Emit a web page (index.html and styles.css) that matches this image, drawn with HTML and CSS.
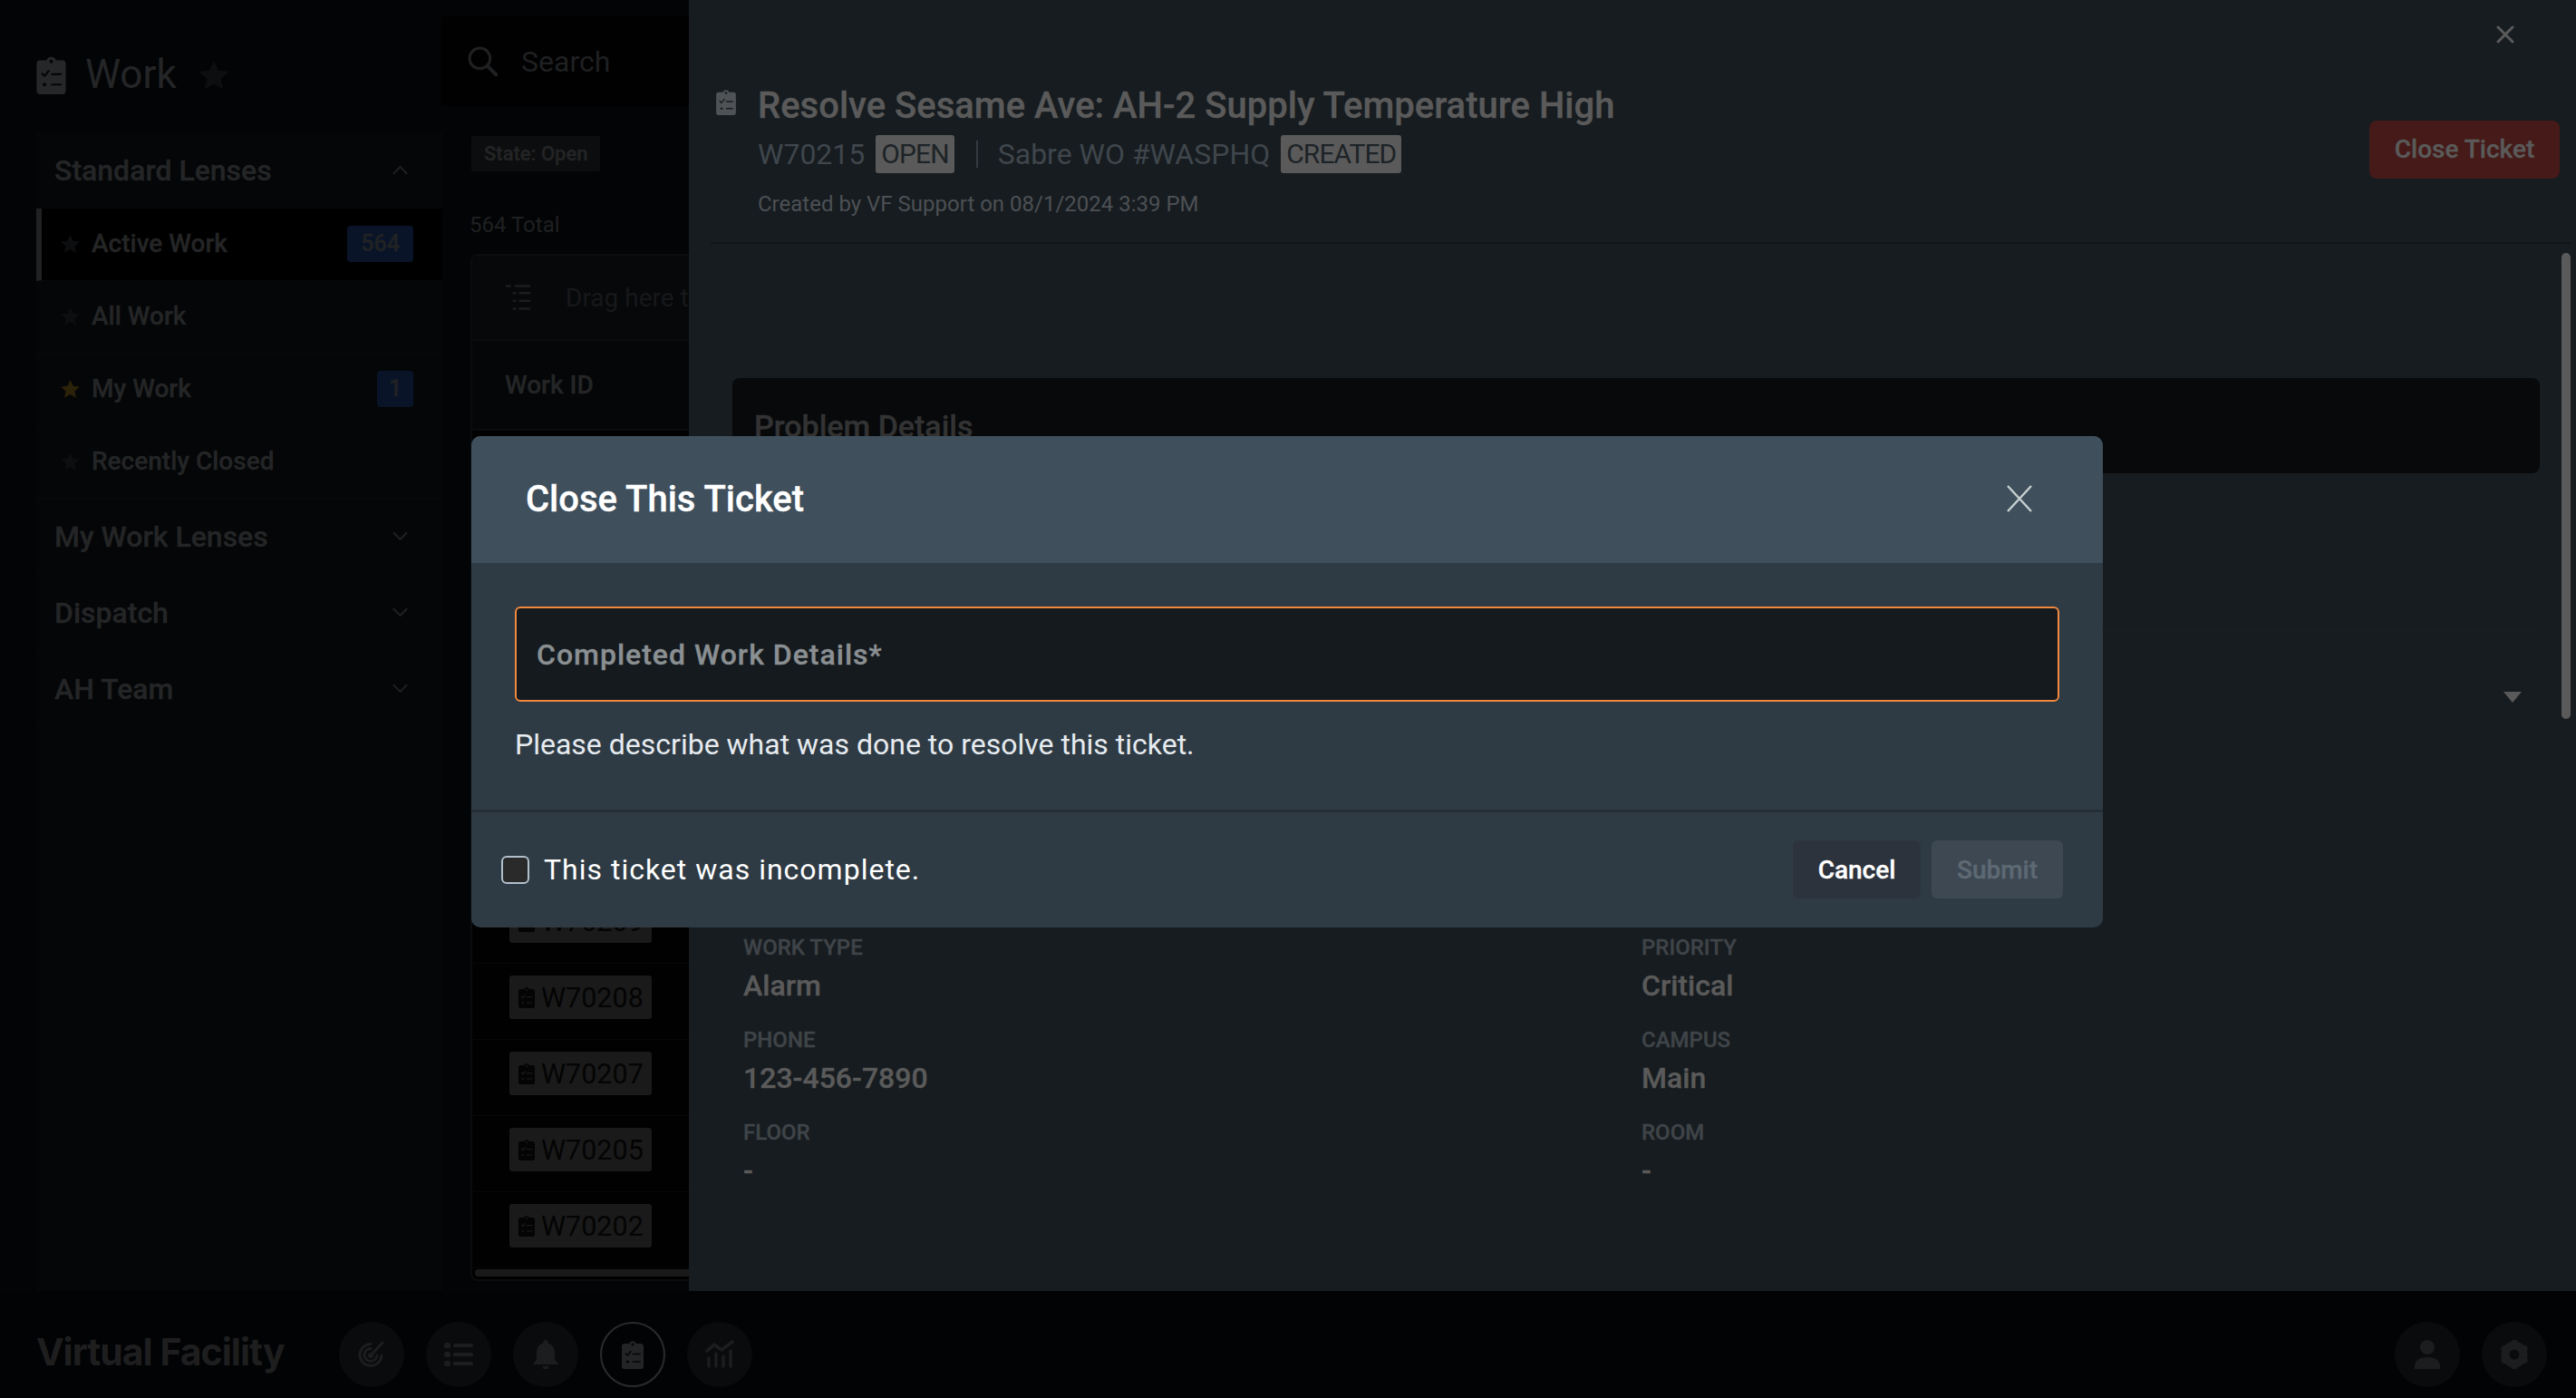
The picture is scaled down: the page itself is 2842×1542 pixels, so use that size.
FILE: index.html
```html
<!DOCTYPE html>
<html lang="en">
<head>
<meta charset="utf-8">
<title>Work - Virtual Facility</title>
<link rel="stylesheet" href="styles.css">
</head>
<body>
<svg class="defs" width="0" height="0" aria-hidden="true">
  <symbol id="clip" viewBox="0 0 24 32">
    <path fill="currentColor" d="M3 4h5.2a4 4 0 0 1 7.6 0H21a3 3 0 0 1 3 3v22a3 3 0 0 1-3 3H3a3 3 0 0 1-3-3V7a3 3 0 0 1 3-3z"/>
    <circle cx="12" cy="5" r="1.5" fill="var(--cut)"/>
    <path fill="none" stroke="var(--cut)" stroke-width="1.6" stroke-linecap="round" stroke-linejoin="round" d="M4.5 15l2 2 3.4-4.2M12.5 15.5H20M12.5 24H20"/>
    <circle cx="6.5" cy="24" r="1.5" fill="var(--cut)"/>
  </symbol>
  <symbol id="star" viewBox="1 1.500 22 21">
    <path fill="currentColor" d="M12 1.5l3.2 7.1 7.7.8-5.8 5.2 1.7 7.6L12 18.3l-6.8 3.9 1.7-7.6L1.100 9.400l7.700-.8z"/>
  </symbol>
  <symbol id="chev-down" viewBox="0 0 18 11">
    <path fill="none" stroke="currentColor" stroke-width="2" stroke-linecap="round" d="M1.500 1.500L9 9l7.500-7.500"/>
  </symbol>
</svg>

<main class="app">
  <aside class="sidebar">
    <div class="page-head">
      <svg class="page-icon"><use href="#clip"/></svg>
      <span class="page-title">Work</span>
      <svg class="page-star"><use href="#star"/></svg>
    </div>
    <nav class="lens-panel">
      <div class="lens-head"><span>Standard Lenses</span><svg class="chev chev-up"><use href="#chev-down"/></svg></div>
      <a class="lens lens-active"><svg class="lens-star"><use href="#star"/></svg><span class="lens-name">Active Work</span><b class="count">564</b></a>
      <a class="lens"><svg class="lens-star"><use href="#star"/></svg><span class="lens-name">All Work</span></a>
      <a class="lens"><svg class="lens-star lens-star-on"><use href="#star"/></svg><span class="lens-name">My Work</span><b class="count count-single">1</b></a>
      <a class="lens"><svg class="lens-star"><use href="#star"/></svg><span class="lens-name">Recently Closed</span></a>
      <div class="lens-head"><span>My Work Lenses</span><svg class="chev"><use href="#chev-down"/></svg></div>
      <div class="lens-head"><span>Dispatch</span><svg class="chev"><use href="#chev-down"/></svg></div>
      <div class="lens-head"><span>AH Team</span><svg class="chev"><use href="#chev-down"/></svg></div>
    </nav>
  </aside>

  <section class="content">
    <div class="search">
      <svg class="search-icon" viewBox="0 0 32 32"><circle cx="13" cy="13" r="11" fill="none" stroke="currentColor" stroke-width="3"/><path d="M21 21l9.500 9.500" stroke="currentColor" stroke-width="4" stroke-linecap="round"/></svg>
      <span>Search</span>
    </div>
    <div class="chip-row"><span class="filter-chip">State: Open</span></div>
    <div class="total">564 Total</div>
    <div class="table">
      <div class="group-row">
        <svg class="group-icon" viewBox="0 0 28 30"><path fill="none" stroke="currentColor" stroke-width="2.500" d="M0 2h6M10 2h18M8 10h4M15 10h13M8 19h4M15 19h13M8 28h4M15 28h13"/></svg>
        <span>Drag here to set row groups</span>
      </div>
      <div class="head-row">Work ID</div>
      <div class="row"></div>
      <div class="row"></div>
      <div class="row"></div>
      <div class="row"></div>
      <div class="row"></div>
      <div class="row"></div>
      <div class="row"><span class="id-chip"><svg class="id-icon"><use href="#clip"/></svg>W70209</span></div>
      <div class="row"><span class="id-chip"><svg class="id-icon"><use href="#clip"/></svg>W70208</span></div>
      <div class="row"><span class="id-chip"><svg class="id-icon"><use href="#clip"/></svg>W70207</span></div>
      <div class="row"><span class="id-chip"><svg class="id-icon"><use href="#clip"/></svg>W70205</span></div>
      <div class="row row-last"><span class="id-chip"><svg class="id-icon"><use href="#clip"/></svg>W70202</span></div>
      <div class="h-scroll"></div>
    </div>
  </section>

  <aside class="drawer">
    <button class="drawer-close" aria-label="Close"><svg viewBox="0 0 20 20"><path d="M2 2l16 16M18 2L2 18" stroke="currentColor" stroke-width="3" stroke-linecap="round"/></svg></button>
    <header class="ticket-head">
      <svg class="ticket-icon"><use href="#clip"/></svg>
      <div class="ticket-text">
        <h1>Resolve Sesame Ave: AH-2 Supply Temperature High</h1>
        <div class="ticket-meta">
          <span>W70215</span><span class="tag">OPEN</span><i class="meta-sep"></i><span>Sabre WO #WASPHQ</span><span class="tag">CREATED</span>
        </div>
        <p class="ticket-by">Created by VF Support on 08/1/2024 3:39 PM</p>
      </div>
      <button class="close-ticket">Close Ticket</button>
    </header>
    <div class="ticket-body">
      <div class="problem"><h2>Problem Details</h2></div>
      <div class="select-arrow"></div>
      <div class="field-rule"></div>
      <dl class="fields">
        <div><dt>WORK TYPE</dt><dd>Alarm</dd></div>
        <div><dt>PRIORITY</dt><dd>Critical</dd></div>
        <div><dt>PHONE</dt><dd>123-456-7890</dd></div>
        <div><dt>CAMPUS</dt><dd>Main</dd></div>
        <div><dt>FLOOR</dt><dd>-</dd></div>
        <div><dt>ROOM</dt><dd>-</dd></div>
      </dl>
      <div class="v-scroll"></div>
    </div>
  </aside>

  <div class="modal" role="dialog">
    <div class="modal-head">
      <h3>Close This Ticket</h3>
      <svg class="modal-x" viewBox="0 0 28 30" preserveAspectRatio="none"><path d="M1 1l26 28M27 1L1 29" stroke="currentColor" stroke-width="2.400"/></svg>
    </div>
    <div class="modal-body">
      <div class="textbox">Completed Work Details*</div>
      <p class="help">Please describe what was done to resolve this ticket.</p>
    </div>
    <div class="modal-foot">
      <label class="check"><span class="check-box"></span>This ticket was incomplete.</label>
      <div class="foot-actions">
        <button class="btn btn-cancel">Cancel</button>
        <button class="btn btn-submit">Submit</button>
      </div>
    </div>
  </div>
</main>

<footer class="bottom-bar">
  <div class="brand">Virtual Facility</div>
  <div class="nav-group">
    <span class="nav-btn"><svg class="nav-icon" viewBox="0 0 32 32" fill="none" stroke="currentColor" stroke-linecap="round"><path stroke-width="3" d="M27 17A12 12 0 1 1 15 4.500"/><path stroke-width="3" d="M22 17a7 7 0 1 1-7-7.500"/><circle cx="15" cy="17" r="3" fill="currentColor" stroke="none"/><path stroke-width="3" d="M15 17L28 3"/></svg></span>
    <span class="nav-btn"><svg class="nav-icon" viewBox="0 0 32 32" fill="currentColor"><rect x="0" y="3" width="7" height="6" rx="2.500"/><rect x="0" y="13" width="7" height="6" rx="2.500"/><rect x="0" y="23" width="7" height="6" rx="2.500"/><rect x="10" y="4" width="22" height="4" rx="1.500"/><rect x="10" y="14" width="22" height="4" rx="1.500"/><rect x="10" y="24" width="22" height="4" rx="1.500"/></svg></span>
    <span class="nav-btn"><svg class="nav-icon" viewBox="0 0 32 32" fill="currentColor"><path d="M16 0a2.500 2.500 0 0 1 2.500 2.500v.700C23.500 4.500 26 9 26 14v6c0 2 1.500 4 3.500 5.500v1.500H2.500v-1.500C4.500 24 6 22 6 20v-6c0-5 2.500-9.500 7.500-10.800v-.700A2.500 2.500 0 0 1 16 0z"/><path d="M12.500 29h7a3.500 3.500 0 0 1-7 0z"/></svg></span>
    <span class="nav-btn nav-btn-on"><svg class="nav-icon nav-clip"><use href="#clip"/></svg></span>
    <span class="nav-btn"><svg class="nav-icon" viewBox="0 0 32 32" fill="none" stroke="currentColor" stroke-linecap="round" stroke-linejoin="round" stroke-width="3.500"><path d="M2 12l8-7 8 6L30 2"/><path d="M4 20v9M12 15v14M20 18v11M28 12v17"/></svg></span>
  </div>
  <div class="nav-group nav-right">
    <span class="nav-btn"><svg class="nav-icon" viewBox="0 0 32 32" fill="currentColor"><circle cx="16" cy="8" r="8"/><path d="M2 32v-3c0-6 5-10 14-10s14 4 14 10v3z"/></svg></span>
    <span class="nav-btn"><svg class="nav-icon" viewBox="0 0 32 32"><circle cx="16" cy="16" r="10" fill="none" stroke="currentColor" stroke-width="9"/><g stroke="currentColor" stroke-width="7" stroke-linecap="round"><path d="M16 3.500v-.500M16 28.500v.500M5.200 9.700l-.4-.200M26.800 22.300l.4.200M5.200 22.300l-.4.200M26.800 9.700l.4-.200"/></g></svg></span>
  </div>
</footer>
</body>
</html>
```
FILE: styles.css
```css
* { box-sizing: border-box; }
html, body { margin: 0; height: 100%; }
body {
  width: 2842px;
  height: 1542px;
  overflow: hidden;
  display: flex;
  flex-direction: column;
  background: #030406;
  font-family: Roboto, "Liberation Sans", sans-serif;
  --cut: #030406;
}
.defs { position: absolute; }
button { font-family: inherit; border: 0; padding: 0; }
p, h1, h2, h3, dl, dd, dt { margin: 0; }

/* Medium text in the reference renders a little heavier than plain Roboto 500 */
.lens-head, .lens-name, .filter-chip, .head-row, .ticket-text h1, .problem h2,
.fields dt, .fields dd, .close-ticket, .modal-head h3, .textbox, .btn, .count {
  -webkit-text-stroke: 0.35px currentColor;
}

.app {
  position: relative;
  flex: 0 0 1424px;
  display: flex;
  overflow: hidden;
}

/* Sidebar */
.sidebar {
  flex: 0 0 488px;
  padding-left: 40px;
  display: flex;
  flex-direction: column;
}
.page-head {
  height: 149px;
  display: flex;
  align-items: flex-start;
  padding-top: 61px;
  color: #232425;
}
.page-icon { width: 33px; height: 43px; color: #262728; --cut: #050608; }
.page-title {
  margin-left: 21px;
  margin-top: -3px;
  font-size: 44px;
  line-height: 48px;
  color: #242526;
}
.page-star { width: 34px; height: 32px; margin: 6px 0 0 24px; color: #0d0e0f; }
.lens-panel {
  flex: 1;
  background: #050608;
  margin-top: -3px;
}
.lens-head {
  height: 84px;
  padding: 0 38px 0 20px;
  display: flex;
  align-items: center;
  justify-content: space-between;
  font-size: 32px;
  font-weight: 500;
  color: #242526;
  border-bottom: 1px solid #07080a;
}
.chev { width: 17px; height: 11px; color: #202122; }
.chev-up { transform: rotate(180deg); }
.lens {
  height: 80px;
  padding: 0 32px 2px 27px;
  display: flex;
  align-items: center;
  font-size: 28px;
  font-weight: 500;
  color: #242526;
  border-bottom: 1px solid #08090b;
}
.lens-active {
  background: #000;
  border-left: 6px solid #202122;
  padding-left: 21px;
  color: #242526;
}
.lens-star { width: 21px; height: 20px; flex: none; color: #0d0e10; }
.lens-star-on { color: #2c2209; }
.lens-name { margin-left: 13px; flex: 1; }
.count {
  height: 40px;
  min-width: 40px;
  padding: 0 15px;
  border-radius: 4px;
  background: #0a1428;
  color: #202224;
  font-size: 25px;
  font-weight: 500;
  line-height: 40px;
  text-align: center;
}
.count-single { padding: 0; }

/* Content */
.content {
  flex: 1;
  min-width: 0;
  padding: 18px 0 0 0;
  display: flex;
  flex-direction: column;
}
.search {
  height: 99px;
  margin-left: -1px;
  padding-left: 29px;
  display: flex;
  align-items: center;
  gap: 26px;
  background: #010102;
  color: #1f2021;
  font-size: 32px;
}
.search-icon { width: 33px; height: 33px; }
.chip-row { margin: 33px 0 0 32px; height: 39px; }
.filter-chip {
  display: inline-block;
  height: 39px;
  padding: 0 14px;
  background: #0c0d0e;
  color: #232425;
  border-radius: 2px;
  font-size: 22px;
  font-weight: 500;
  line-height: 39px;
}
.total {
  margin: 43px 0 0 30px;
  font-size: 24px;
  line-height: 32px;
  color: #1f2021;
}
.table {
  margin: 16px 0 0 31px;
  width: 1600px;
  height: 1133px;
  border: 2px solid #0b0c0d;
  border-radius: 8px;
  background: #010101;
  position: relative;
  overflow: hidden;
}
.group-row {
  height: 94px;
  padding-left: 37px;
  display: flex;
  align-items: center;
  gap: 39px;
  background: #07080a;
  color: #17181a;
  font-size: 28px;
  border-bottom: 2px solid #0b0c0d;
}
.group-icon { width: 27px; height: 30px; color: #1c1d1e; }
.head-row {
  height: 99px;
  padding: 0 0 0 36px;
  display: flex;
  align-items: center;
  background: #050608;
  color: #242526;
  font-size: 28px;
  font-weight: 500;
  border-bottom: 2px solid #0b0c0d;
}
.row {
  height: 84px;
  padding: 13px 0 0 41px;
  background: #010101;
  border-bottom: 1px solid #060708;
}
.id-chip {
  display: inline-flex;
  align-items: center;
  width: 157px;
  height: 48px;
  padding-left: 10px;
  background: #1a1a1a;
  border-radius: 3px;
  color: #040404;
  font-size: 30.500px;
  gap: 7px;
}
.id-icon { width: 18px; height: 24px; color: #040404; --cut: #1a1a1a; }
.h-scroll {
  position: absolute;
  left: 3px;
  right: 3px;
  bottom: 3px;
  height: 8px;
  border-radius: 4px;
  background: #191919;
}

/* Drawer */
.drawer {
  position: absolute;
  left: 760px;
  top: 0;
  width: 2082px;
  height: 1424px;
  background: #171c20;
  display: flex;
  flex-direction: column;
}
.drawer-close {
  position: absolute;
  right: 68px;
  top: 28px;
  width: 20px;
  height: 20px;
  background: none;
  color: #5a5a5a;
}
.drawer-close svg { display: block; width: 20px; height: 20px; }
.ticket-head {
  flex: 0 0 269px;
  margin: 0 6px 0 24px;
  padding: 98px 12px 0 6px;
  display: flex;
  align-items: flex-start;
  border-bottom: 2px solid #111518;
}
.ticket-icon { width: 22px; height: 29px; flex: none; color: #505356; --cut: #171c20; }
.ticket-text { flex: 1; margin-left: 24px; }
.ticket-text h1 {
  font-size: 40px;
  font-weight: 500;
  line-height: 40px;
  margin-top: -1px;
  color: #5a5a5a;
}
.ticket-meta {
  margin-top: 12px;
  display: flex;
  align-items: center;
  gap: 12px;
  font-size: 32px;
  color: #3f464c;
  height: 42px;
}
.tag {
  height: 42px;
  line-height: 42px;
  padding: 0 6px;
  background: #5a5a5a;
  border-radius: 3px;
  color: #1d2327;
  font-size: 30px;
  letter-spacing: -0.9px;
}
.meta-sep {
  width: 2px;
  height: 30px;
  margin: 0 10px 0 12px;
  background: #333a40;
}
.ticket-by {
  margin-top: 18px;
  font-size: 24px;
  line-height: 32px;
  color: #4c5054;
}
.close-ticket {
  width: 210px;
  height: 64px;
  margin-top: 35px;
  padding-bottom: 2px;
  background: #451a18;
  color: #5a5a5a;
  border-radius: 8px;
  font-size: 28px;
  font-weight: 500;
}
.ticket-body {
  position: relative;
  flex: 1;
  padding: 148px 40px 0 48px;
}
.problem {
  height: 105px;
  padding: 30px 0 0 24px;
  background: #07090b;
  border-radius: 8px;
}
.problem h2 { font-size: 34px; font-weight: 500; line-height: 46px; color: #333; }
.select-arrow {
  position: absolute;
  left: 2002px;
  top: 494px;
  width: 20px;
  height: 12px;
  background: #5a5a5a;
  clip-path: polygon(0 0, 100% 0, 50% 100%);
}
.field-rule { height: 1px; margin-top: 173px; background: #1a1f23; }
.fields {
  margin: 337px 0 0 12px;
  display: grid;
  grid-template-columns: 991px 1fr;
  grid-auto-rows: 102px;
}
.fields dt { font-size: 24px; font-weight: 500; line-height: 24px; color: #3f4448; }
.fields dd { margin-top: 10px; font-size: 32px; font-weight: 500; line-height: 40px; color: #5a5a5a; }
.v-scroll {
  position: absolute;
  left: 2066px;
  top: 10px;
  width: 10px;
  height: 514px;
  border-radius: 5px;
  background: #5a5a5a;
}

/* Modal */
.modal {
  position: absolute;
  left: 520px;
  top: 481px;
  width: 1800px;
  height: 542px;
  border-radius: 10px;
  background: #2f3b44;
  display: flex;
  flex-direction: column;
  overflow: hidden;
}
.modal-head {
  flex: 0 0 140px;
  padding: 0 78px 2px 60px;
  background: #3f4f5c;
  display: flex;
  align-items: center;
  justify-content: space-between;
}
.modal-head h3 { font-size: 40px; font-weight: 500; color: #fff; }
.modal-x { width: 28px; height: 30px; color: #c8d0d0; }
.modal-body {
  flex: 0 0 275px;
  padding: 48px 48px 0;
  border-bottom: 3px solid #262e35;
}
.textbox {
  height: 105px;
  padding-left: 22px;
  display: flex;
  align-items: center;
  background: #151a1e;
  border: 2px solid #f0883e;
  border-radius: 6px;
  color: #8a8f92;
  font-size: 32px;
  font-weight: 500;
  letter-spacing: 1px;
}
.help { margin-top: 29px; font-size: 32px; line-height: 36px; color: #e6ebf0; }
.modal-foot {
  flex: 1;
  padding: 0 44px 1px 33px;
  display: flex;
  align-items: center;
  justify-content: space-between;
}
.check {
  display: flex;
  align-items: center;
  gap: 16px;
  color: #fff;
  font-size: 32px;
  letter-spacing: 1px;
}
.check-box {
  width: 31px;
  height: 31px;
  background: #2a2a2a;
  border: 2px solid #b0bfcc;
  border-radius: 6px;
}
.foot-actions { display: flex; gap: 12px; }
.btn {
  height: 64px;
  border-radius: 6px;
  font-size: 28px;
  font-weight: 500;
}
.btn-cancel { width: 141px; background: #2d333c; color: #fff; }
.btn-submit { width: 145px; background: #3d4853; color: #5d6973; }

/* Bottom bar */
.bottom-bar {
  flex: 1;
  padding-left: 40px;
  display: flex;
  align-items: flex-start;
  background: #020305;
}
.brand {
  width: 334px;
  margin-top: 42px;
  font-family: Inter, Lato, sans-serif;
  font-size: 41px;
  font-weight: 700;
  line-height: 50px;
  letter-spacing: -1px;
  color: #1e1e1f;
}
.nav-group { display: flex; gap: 24px; margin-top: 34px; }
.nav-right { margin-left: auto; margin-right: 32px; }
.nav-btn {
  width: 72px;
  height: 72px;
  border-radius: 50%;
  background: #0a0b0d;
  color: #1c1d1e;
  display: flex;
  align-items: center;
  justify-content: center;
}
.nav-btn-on { background: none; border: 2px solid #2a2b2c; }
.nav-icon { width: 32px; height: 32px; }
.nav-clip { --cut: #030406; width: 24px; height: 32px; color: #232425; }
```
